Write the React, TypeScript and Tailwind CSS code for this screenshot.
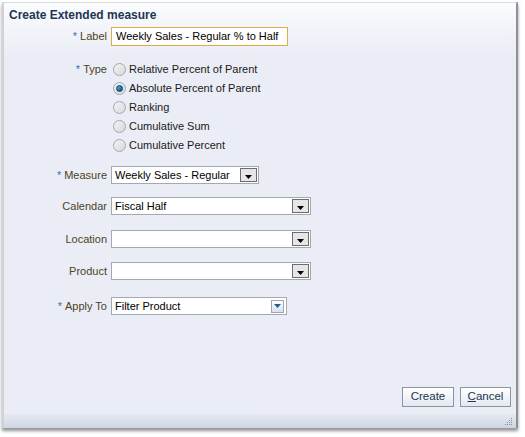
import React from 'react'

const font = { fontFamily: '"Liberation Sans", Arial, sans-serif' }

function Label({ text, required }: { text: string; required?: boolean }) {
  return (
    <div className="flex justify-end items-center pr-[4px] text-[11px] text-[#4a4326] whitespace-nowrap">
      {required && <span className="text-[#3b6fae] mr-[3px] text-[11px]">*</span>}
      {text}
    </div>
  )
}

function ArrowButton({ blue }: { blue?: boolean }) {
  if (blue) {
    return (
      <div className="w-[13px] h-[13px] mr-[2px] border border-[#9aa6b6] bg-gradient-to-b from-[#ffffff] to-[#d8e0ea] flex items-center justify-center">
        <svg width="7" height="4" viewBox="0 0 7 4">
          <path d="M0 0H7L3.5 4Z" fill="#1d5f8e" />
        </svg>
      </div>
    )
  }
  return (
    <div className="w-[17px] h-[14px] mr-[1px] border border-[#6d6d6d] bg-[#e6e6e6] flex items-center justify-center">
      <svg width="7" height="4" viewBox="0 0 7 4" className="mt-[3px]">
        <path d="M0 0H7L3.5 4Z" fill="#000" />
      </svg>
    </div>
  )
}

function Select({ value, width, blue }: { value?: string; width: string; blue?: boolean }) {
  return (
    <div className={`${width} h-[18px] border border-[#a3a9b3] bg-white flex items-center justify-between`}>
      <span className="pl-[3px] text-[11px] text-black whitespace-nowrap">{value}</span>
      <ArrowButton blue={blue} />
    </div>
  )
}

function Radio({ checked, label }: { checked?: boolean; label: string }) {
  return (
    <div className="h-[19px] flex items-center gap-[3px]">
      <div className="w-[13px] h-[13px] rounded-full border border-[#a3a7ad] bg-gradient-to-br from-[#f4f4f4] to-[#d6d8dc] flex items-center justify-center">
        {checked && (
          <div className="w-[7px] h-[7px] rounded-full bg-gradient-to-br from-[#5ab0e8] to-[#0d4f86] border border-[#0b3a66]" />
        )}
      </div>
      <span className="text-[11px] text-[#1a1a1a] whitespace-nowrap">{label}</span>
    </div>
  )
}

function Btn({ children, width }: { children: React.ReactNode; width: string }) {
  return (
    <div className={`${width} h-[20px] border border-[#8a94a3] bg-gradient-to-b from-[#ffffff] to-[#e4e8ee] flex items-center justify-center text-[11.5px] text-[#1b3550]`}>
      {children}
    </div>
  )
}

export default function App() {
  return (
    <div className="w-[525px] h-[437px] bg-white overflow-hidden" style={font}>
      <div className="ml-[2px] mt-[2px] w-[516px] h-[426px] flex flex-col border-l-2 border-l-[#cfd2d8] border-r-2 border-r-[#8e9096] border-t border-t-[#d8dbe0] shadow-[0_3px_3px_rgba(60,60,70,0.55)] bg-gradient-to-b from-[#fbfcfe] via-[#eaedf5] via-[12%] to-[#eaedf5]">
        <div className="pl-[5px] pt-[3px] text-[12px] font-bold text-[#1e3652]">Create Extended measure</div>

        <div className="grid grid-cols-[107px_1fr] mt-[3px] items-start">
          <div className="h-[19px] flex items-center justify-end"><Label text="Label" required /></div>
          <div className="w-[177px] h-[19px] border border-[#dfac4c] bg-white flex items-center">
            <span className="pl-[4px] text-[11px] text-black whitespace-nowrap">Weekly Sales - Regular % to Half</span>
          </div>

          <div className="mt-[14px] h-[19px] flex items-center justify-end"><Label text="Type" required /></div>
          <div className="mt-[14px] pl-[2px] flex flex-col">
            <Radio label="Relative Percent of Parent" />
            <Radio label="Absolute Percent of Parent" checked />
            <Radio label="Ranking" />
            <Radio label="Cumulative Sum" />
            <Radio label="Cumulative Percent" />
          </div>

          <div className="mt-[11px] h-[18px] flex items-center justify-end"><Label text="Measure" required /></div>
          <div className="mt-[11px]"><Select value="Weekly Sales - Regular" width="w-[148px]" /></div>

          <div className="mt-[13px] h-[18px] flex items-center justify-end"><Label text="Calendar" /></div>
          <div className="mt-[13px]"><Select value="Fiscal Half" width="w-[200px]" /></div>

          <div className="mt-[15px] h-[18px] flex items-center justify-end"><Label text="Location" /></div>
          <div className="mt-[15px]"><Select width="w-[200px]" /></div>

          <div className="mt-[14px] h-[18px] flex items-center justify-end"><Label text="Product" /></div>
          <div className="mt-[14px]"><Select width="w-[200px]" /></div>

          <div className="mt-[17px] h-[18px] flex items-center justify-end"><Label text="Apply To" required /></div>
          <div className="mt-[17px]"><Select value="Filter Product" width="w-[176px]" blue /></div>
        </div>

        <div className="flex-1" />

        <div className="flex justify-end gap-[6px] pr-[5px] pb-[7px]">
          <Btn width="w-[52px]">Create</Btn>
          <Btn width="w-[51px]"><span><span className="underline">C</span>ancel</span></Btn>
        </div>

        <div className="h-[14px] bg-gradient-to-b from-[#e6e9f1] to-[#cfd6e2] flex justify-end items-end pr-[3px] pb-[2px]">
          <svg width="8" height="8" viewBox="0 0 8 8">
            {[[6, 0], [6, 2], [4, 2], [6, 4], [4, 4], [2, 4], [6, 6], [4, 6], [2, 6], [0, 6]].map(([x, y], i) => (
              <rect key={i} x={x} y={y} width="1" height="1" fill="#8a8f98" />
            ))}
          </svg>
        </div>
      </div>
    </div>
  )
}
